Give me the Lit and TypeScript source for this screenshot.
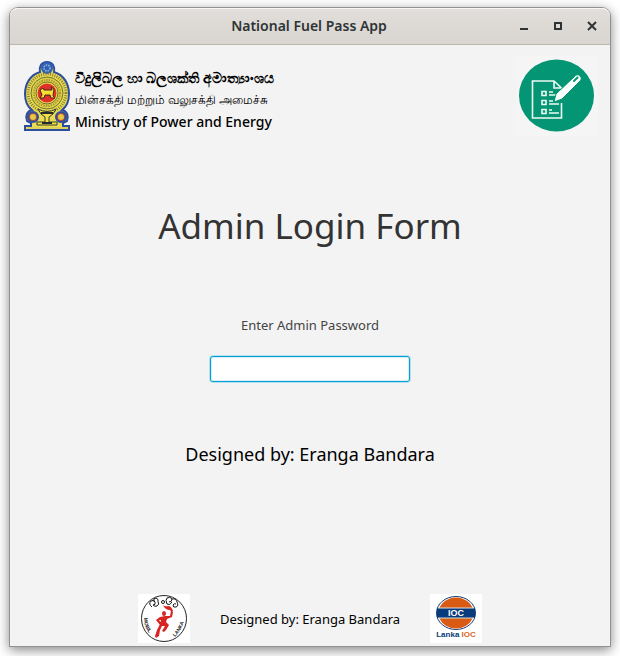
import { LitElement, html, css } from "lit";
import { customElement } from "lit/decorators.js";

const emblem = html`<svg class="emblem" viewBox="0 0 46 70" role="img" aria-label="Emblem of Sri Lanka">
  <path d="M23 1C17 1 15 6 16 11C6 14 1 23 1 33C1 40 4 46 8 49C3 50 1 55 3 60L7 62V65H1V69H45V65H39V62L43 60C45 55 43 50 38 49C42 46 45 40 45 33C45 23 40 14 30 11C31 6 29 1 23 1Z" fill="#e9dc52" stroke="#2d4d9d" stroke-width="2"/>
  <circle cx="23" cy="7" r="6" fill="#2e60b8"/>
  <circle cx="23" cy="7" r="3" fill="none" stroke="#9db7ce" stroke-width="1.5" stroke-dasharray="1.5 1"/>
  <circle cx="23" cy="32" r="19" fill="none" stroke="#887b35" stroke-width="3" stroke-dasharray="1 1.3"/>
  <circle cx="23" cy="32" r="16" fill="#ddd045" stroke="#6f7135" stroke-width="1"/>
  <circle cx="23" cy="32" r="13" fill="none" stroke="#a89834" stroke-width="2" stroke-dasharray="1.5 1"/>
  <circle cx="23" cy="32" r="11" fill="#eee04a" stroke="#746e3d" stroke-width="1"/>
  <circle cx="23" cy="32" r="9.5" fill="#df302b"/>
  <path d="M16 29L19 27L20 29H28L27 26L30 28L29 35L31 37H27L26 34H21L20 37H16L18 34Z" fill="#f3df35" stroke="#4b2718" stroke-width="1"/>
  <path d="M14 48Q23 53 32 48L29 53L25 56V61H33V64H13V61H21V56L17 53Z" fill="#f0df46" stroke="#353c31" stroke-width="1"/>
  <path d="M17 52H29M18 62H28" stroke="#252a2a" stroke-width="2"/>
  <circle cx="9" cy="56" r="5" fill="#b74936" stroke="#2d4d9d" stroke-width="2"/>
  <circle cx="37" cy="56" r="5" fill="#b74936" stroke="#2d4d9d" stroke-width="2"/>
  <circle cx="9" cy="56" r="3" fill="#e3ca43"/><circle cx="37" cy="56" r="3" fill="#e3ca43"/>
  <path d="M3 67H43" stroke="#dfd057" stroke-width="2"/>
</svg>`;

const formIcon = html`<svg class="form-icon" viewBox="0 0 82 80" role="img" aria-label="Form">
  <rect width="82" height="80" fill="#f5f5f5"/>
  <ellipse cx="40.5" cy="39.5" rx="37.5" ry="36" fill="#049674"/>
  <g fill="none" stroke="#effaf5" stroke-width="1.6">
    <path d="M45.5 47V62H16.5V25H38L45.5 32M38 25V32H45.5"/>
    <path d="M26 35.5H30V39.5H26ZM26 44.5H30V48.5H26ZM26 53.5H30V57.5H26Z"/>
    <path d="M33 36H37M33 39H41M33 45H37M33 48H43M33 54H36M33 57H43"/>
  </g>
  <path d="M38 46L40 38L58 21Q61 17 64 20Q67 23 63 26L46 43Z" fill="#fafffc" stroke="#049674" stroke-width="1"/>
  <path d="M58 25L61.5 21.5" stroke="#049674" stroke-width="2" stroke-linecap="round"/>
</svg>`;

const torchLogo = html`<svg class="torch" viewBox="0 0 52 49" role="img" aria-label="Mobile Lanka">
  <rect width="52" height="49" fill="#fff"/>
  <ellipse cx="26" cy="24.5" rx="22.5" ry="23" fill="none" stroke="#292425" stroke-width="1"/>
  <g fill="none" stroke="#171717" stroke-width="1">
    <path d="M14 13Q10 10 13 7Q16 5 17 8Q18 11 15 11M16 8Q15 4 18 4Q21 5 20 8Q22 10 19 12Q17 13 15 11"/>
    <circle cx="25" cy="8" r="1.5"/>
    <path d="M29 10Q27 6 29 4Q32 2 34 5Q34 8 31 8M29 10Q32 12 34 8M34 5Q38 4 39 8Q41 12 38 13Q35 14 35 11Q36 9 38 10"/>
  </g>
  <g fill="#d92522">
    <ellipse cx="26" cy="19.5" rx="2" ry="2.5"/>
    <path d="M25 11Q27 13 30 12Q33 12 34 15L35 16L34 19L32 16Q27 16 25 11Z"/>
    <path d="M33 17L35 18L34 23L29 25L28 28L31 31L28 36L26 38L24 37L27 32L24 32L22 36L21 42L18 44L17 42L19 36L22 30L23 26L21 26L23 29L22 31L18 26L22 23L27 22L32 22Z"/>
  </g>
  <defs><path id="left-arc" d="M6 24Q6 36 16 44"/><path id="right-arc" d="M37 43Q44 36 47 24"/></defs>
  <g class="seal-text"><text><textPath href="#left-arc">MOBIL</textPath></text><text><textPath href="#right-arc">LANKA</textPath></text></g>
</svg>`;

const iocLogo = html`<svg class="ioc" viewBox="0 0 52 49" role="img" aria-label="Lanka IOC">
  <rect width="52" height="49" fill="#fff"/>
  <ellipse cx="26" cy="19" rx="19.5" ry="16.5" fill="#fff" stroke="#183d78" stroke-width="1"/>
  <ellipse cx="26" cy="19" rx="17.5" ry="15.5" fill="#d85a13"/>
  <rect x="7" y="14" width="38" height="10" fill="#073b7b"/>
  <path d="M8 14H44M8 24H44" stroke="#d9dfdf" stroke-width="1"/>
  <text class="ioc-name" x="26" y="22" text-anchor="middle">IOC</text>
  <text class="ioc-caption" x="26" y="43" text-anchor="middle">Lanka <tspan class="ioc-accent">IOC</tspan></text>
</svg>`;

@customElement("app-root")
export class AppRoot extends LitElement {
  static styles = css`
    :host {
      display: flex;
      box-sizing: border-box;
      min-height: 100vh;
      padding: 8px 10px 10px;
      background: #fff;
      color: #000;
      font-family: "Noto Sans", sans-serif;
    }
    * { box-sizing: border-box; }
    .window {
      flex: 1;
      display: flex;
      flex-direction: column;
      background: #f3f3f3;
      border-radius: 8px 8px 0 0;
      box-shadow: 0 0 0 1px #929292, 0 3px 12px 1px rgba(0, 0, 0, 0.48);
    }
    .titlebar {
      display: grid;
      grid-template-columns: 1fr auto 1fr;
      align-items: center;
      height: 37px;
      padding-right: 4px;
      border-bottom: 1px solid #bdb6ab;
      border-radius: 8px 8px 0 0;
      background: linear-gradient(#e1dedb, #d9d5d0);
      box-shadow: inset 0 1px #f7f6f5;
    }
    .title {
      grid-column: 2;
      margin: 0;
      padding-left: 2px;
      font-size: 14px;
      line-height: 20px;
      font-weight: 600;
      color: #2e3436;
    }
    .controls { display: flex; justify-content: flex-end; gap: 6px; }
    .control {
      display: grid;
      place-items: center;
      width: 28px;
      height: 28px;
      padding: 0;
      border: 0;
      background: none;
    }
    .control svg { width: 10px; height: 10px; fill: none; stroke: #2e3436; stroke-width: 2; }
    .header {
      display: flex;
      justify-content: space-between;
      padding: 11px 12px 0 14px;
    }
    .ministry { display: flex; gap: 5px; padding-top: 5px; }
    .emblem { width: 46px; height: 70px; }
    .names { display: flex; flex-direction: column; padding-top: 6px; white-space: nowrap; }
    .names p { margin: 0; line-height: 22px; }
    .sinhala { font-size: 14px; font-weight: 700; }
    .tamil { font-size: 12px; }
    .english { font-size: 14px; font-weight: 500; }
    .form-icon { width: 82px; height: 80px; }
    .login { display: flex; flex-direction: column; align-items: center; }
    .heading {
      margin: 65px 0 0;
      font-size: 35px;
      line-height: 50px;
      font-weight: 400;
      color: #333;
    }
    .label { margin-top: 65px; font-size: 13px; line-height: 18px; color: #444; }
    .password {
      width: 200px;
      height: 26px;
      margin-top: 22px;
      padding: 4px 8px;
      border: 1px solid #039ed3;
      border-radius: 3px;
      background: #fff;
      box-shadow: 0 0 0 1px #b5e0ef, inset 0 0 0 1px #d9eff7;
      outline: 0;
      font: 13px "Noto Sans", sans-serif;
    }
    .credit { margin: 60px 0 0; font-size: 18px; line-height: 25px; }
    .footer {
      display: flex;
      align-items: center;
      justify-content: center;
      gap: 30px;
      margin-top: auto;
      padding-bottom: 3px;
    }
    .footer p { margin: 0; font-size: 13px; line-height: 18px; }
    .torch, .ioc { width: 52px; height: 49px; }
    .seal-text { font: 700 5px "Liberation Sans", sans-serif; fill: #222; }
    .ioc-name { font: 700 9px "Liberation Sans", sans-serif; fill: #fff; }
    .ioc-caption { font: 700 8px "Liberation Sans", sans-serif; fill: #073b7b; }
    .ioc-accent { fill: #d86525; }
  `;

  render() {
    return html`
      <div class="window">
        <header class="titlebar">
          <h1 class="title">National Fuel Pass App</h1>
          <div class="controls">
            <button class="control" aria-label="Minimize"><svg viewBox="0 0 10 10"><path d="M1 8H9"/></svg></button>
            <button class="control" aria-label="Maximize"><svg viewBox="0 0 10 10"><path d="M2 2H8V8H2Z"/></svg></button>
            <button class="control" aria-label="Close"><svg viewBox="0 0 10 10"><path d="M1 1L9 9M9 1L1 9"/></svg></button>
          </div>
        </header>
        <section class="header">
          <div class="ministry">
            ${emblem}
            <div class="names">
              <p class="sinhala" lang="si">විදුලිබල හා බලශක්ති අමාත්‍යාංශය</p>
              <p class="tamil" lang="ta">மின்சக்தி மற்றும் வலுசக்தி அமைச்சு</p>
              <p class="english">Ministry of Power and Energy</p>
            </div>
          </div>
          ${formIcon}
        </section>
        <main class="login">
          <h2 class="heading">Admin Login Form</h2>
          <label class="label" for="password">Enter Admin Password</label>
          <input class="password" id="password" type="password" />
          <p class="credit">Designed by: Eranga Bandara</p>
        </main>
        <footer class="footer">
          ${torchLogo}
          <p>Designed by: Eranga Bandara</p>
          ${iocLogo}
        </footer>
      </div>
    `;
  }
}
